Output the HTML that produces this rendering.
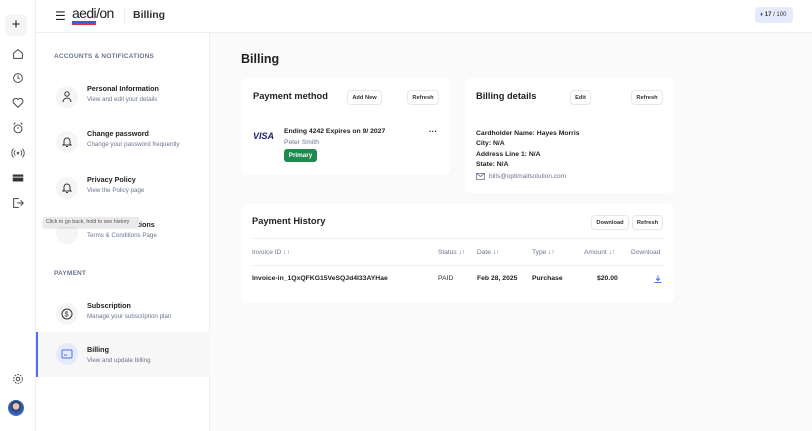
<!DOCTYPE html>
<html><head><style>
*{box-sizing:border-box;margin:0;padding:0}
body{width:812px;height:431px;overflow:hidden;background:#fafafa;font-family:"Liberation Sans",sans-serif;color:#222;position:relative}
.abs{position:absolute}
.rail{left:0;top:0;width:36px;height:431px;background:#fff;border-right:1px solid #eee}
.top{left:36px;top:0;width:776px;height:33px;background:#fff;border-bottom:1px solid #eee}
.side{left:36px;top:33px;width:174px;height:398px;background:#fff;border-right:1px solid #eee}
.ri{position:absolute;left:11px;width:14px;height:14px}
.lbl{font-size:6.5px;color:#6b7590;letter-spacing:.2px;font-weight:bold}
.it{position:absolute;left:0;width:174px;height:46px}
.ic{position:absolute;left:20px;top:12px;width:22px;height:22px;border-radius:50%;background:#f5f5f5}
.t{position:absolute;left:51px;top:10px;font-size:7.2px;font-weight:bold;color:#222}
.s{position:absolute;left:51px;top:22px;font-size:6.2px;color:#6b7590}
.card{position:absolute;background:#fff;border-radius:6px}
.h{position:absolute;font-size:9.3px;font-weight:bold;color:#222}
.btn{position:absolute;height:15px;border:1px solid #e5e7eb;border-radius:4px;font-size:5.7px;font-weight:bold;color:#333;display:flex;align-items:center;justify-content:center;background:#fff}
.b7{font-size:6.8px;font-weight:bold;color:#222;position:absolute}
.th{position:absolute;font-size:6.6px;color:#6b7590;top:45px}
.td{position:absolute;font-size:6.8px;font-weight:bold;color:#222;top:71px}
</style></head><body>
<div class="abs rail">
 <div class="abs" style="left:5px;top:14px;width:22px;height:22px;border-radius:6px;background:#f5f5f5;text-align:center;font-size:15px;line-height:21px;color:#222">+</div>
 <svg class="ri" style="top:47px" viewBox="0 0 16 16" fill="none" stroke="#444" stroke-width="1.1"><path d="M3 7l5-4 5 4v6H3z"/></svg>
 <svg class="ri" style="top:71px" viewBox="0 0 16 16" fill="none" stroke="#444" stroke-width="1.1"><circle cx="8" cy="8" r="5"/><path d="M8 5v3l2 1"/></svg>
 <svg class="ri" style="top:96px" viewBox="0 0 16 16" fill="none" stroke="#444" stroke-width="1.1"><path d="M8 13L3 8a3 3 0 015-4 3 3 0 015 4z"/></svg>
 <svg class="ri" style="top:121px" viewBox="0 0 16 16" fill="none" stroke="#444" stroke-width="1.1"><circle cx="8" cy="9" r="4.5"/><path d="M8 7v2M3 4l2-2M13 4l-2-2"/></svg>
 <svg class="ri" style="top:146px" viewBox="0 0 16 16" fill="none" stroke="#444" stroke-width="1"><circle cx="8" cy="8" r="1"/><path d="M5 5a4 4 0 000 6M11 5a4 4 0 010 6M3 3a7 7 0 000 10M13 3a7 7 0 010 10"/></svg>
 <svg class="ri" style="top:171px" viewBox="0 0 16 16"><rect x="2" y="4" width="12" height="8" fill="#333"/><path d="M2 7h12" stroke="#fff"/></svg>
 <svg class="ri" style="top:196px" viewBox="0 0 16 16" fill="none" stroke="#444" stroke-width="1.1"><path d="M9 3H3v10h6M7 8h7M11 5l3 3-3 3"/></svg>
 <svg class="ri" style="top:372px" viewBox="0 0 16 16" fill="none" stroke="#444" stroke-width="1.1"><circle cx="8" cy="8" r="2"/><circle cx="8" cy="8" r="5" stroke-dasharray="2 1.2"/></svg>
 <div class="abs" style="left:8px;top:400px;width:16px;height:16px;border-radius:50%;background:radial-gradient(circle at 50% 40%,#e8c4a8 25%,#2c3e70 28%,#3a6ec8 70%)"></div>
</div>
<div class="abs top">
 <div class="abs" style="left:19px;top:9px;font-size:12px;color:#222">☰</div>
 <div class="abs" style="left:36px;top:5px;font-size:14px;color:#222;letter-spacing:-.6px">aedi/on</div>
 <div class="abs" style="left:36px;top:21px;width:24px;height:1.5px;background:#3b5bdb"></div>
 <div class="abs" style="left:36px;top:23px;width:24px;height:1.5px;background:#e03131"></div>
 <div class="abs" style="left:88px;top:7px;width:1px;height:18px;background:#eee"></div>
 <div class="abs" style="left:97px;top:9px;font-size:10.5px;font-weight:bold;color:#333">Billing</div>
 <div class="abs" style="left:719px;top:7px;width:38px;height:16px;border-radius:4px;background:#e6ebfb;font-size:6px;color:#333;line-height:16px;padding-left:5px"><span style="color:#3b5bdb">♦</span> <b>17</b> / 100</div>
</div>
<div class="abs side">
 <div class="abs lbl" style="left:18px;top:20px">ACCOUNTS &amp; NOTIFICATIONS</div>
 <div class="it" style="top:41px"><div class="ic"></div><svg class="abs" style="left:26px;top:17px" width="10" height="12" viewBox="0 0 10 12" fill="none" stroke="#333"><circle cx="5" cy="3" r="2.2"/><path d="M1 11a4 4 0 018 0"/></svg><div class="t">Personal Information</div><div class="s">View and edit your details</div></div>
 <div class="it" style="top:86px"><div class="ic"></div><svg class="abs" style="left:26px;top:17px" width="10" height="12" viewBox="0 0 10 12" fill="none" stroke="#333"><path d="M2 8V5a3 3 0 016 0v3l1 1H1zM4 10.5h2"/></svg><div class="t">Change password</div><div class="s">Change your password frequently</div></div>
 <div class="it" style="top:132px"><div class="ic"></div><svg class="abs" style="left:26px;top:17px" width="10" height="12" viewBox="0 0 10 12" fill="none" stroke="#333"><path d="M2 8V5a3 3 0 016 0v3l1 1H1zM4 10.5h2"/></svg><div class="t">Privacy Policy</div><div class="s">View the Policy page</div></div>
 <div class="it" style="top:177px"><div class="ic"></div><div class="t">Terms &amp; Conditions</div><div class="s">Terms &amp; Conditions Page</div></div>
 <div class="abs" style="left:7px;top:184px;width:96px;height:10px;background:#eceae8;border-radius:2px;font-size:5.3px;color:#555;line-height:10px;padding-left:3px;box-shadow:0 1px 2px rgba(0,0,0,.15);z-index:5">Click to go back, hold to see history</div>
 <div class="abs lbl" style="left:18px;top:237px">PAYMENT</div>
 <div class="it" style="top:258px"><div class="ic"></div><svg class="abs" style="left:25px;top:17px" width="12" height="12" viewBox="0 0 12 12" fill="none" stroke="#333"><circle cx="6" cy="6" r="5"/><text x="3.6" y="8.6" font-size="7" fill="#333" stroke="none" font-family="Liberation Sans">$</text></svg><div class="t">Subscription</div><div class="s">Manage your subscription plan</div></div>
 <div class="it" style="top:299px;height:45px;background:#f7f7f7;border-left:2px solid #4c6ef5"><div class="ic" style="left:18px;top:11px;background:#e6ebfb"></div><svg class="abs" style="left:23px;top:17px" width="12" height="10" viewBox="0 0 12 10" fill="none" stroke="#4c6ef5"><rect x="1" y="1" width="10" height="8" rx="1"/><path d="M3 6h3"/></svg><div class="t" style="left:49px;top:13px">Billing</div><div class="s" style="left:49px;top:25px">View and update billing</div></div>
</div>
<div class="abs" style="left:241px;top:52px;font-size:12.5px;font-weight:bold;color:#222">Billing</div>
<div class="card" style="left:241px;top:78px;width:209px;height:97px">
 <div class="h" style="left:12px;top:13px">Payment method</div>
 <div class="btn" style="left:106px;top:12px;width:35px">Add New</div>
 <div class="btn" style="left:166px;top:12px;width:32px">Refresh</div>
 <div class="abs" style="left:12px;top:53px;font-size:9px;font-weight:bold;font-style:italic;color:#1a1f71">VISA</div>
 <div class="b7" style="left:43px;top:50px">Ending 4242 Expires on 9/ 2027</div>
 <div class="abs" style="left:43px;top:61px;font-size:6.7px;color:#6b7590">Peter Smith</div>
 <div class="abs" style="left:43px;top:71px;width:33px;height:13px;border-radius:3px;background:#1e8a4e;color:#fff;font-size:6.3px;font-weight:bold;text-align:center;line-height:13px">Primary</div>
 <div class="abs" style="left:188px;top:49px;font-size:8px;font-weight:bold">···</div>
</div>
<div class="card" style="left:465px;top:78px;width:209px;height:115px">
 <div class="h" style="left:11px;top:13px">Billing details</div>
 <div class="btn" style="left:105px;top:12px;width:21px">Edit</div>
 <div class="btn" style="left:166px;top:12px;width:32px">Refresh</div>
 <div class="b7" style="left:11px;top:51px;line-height:10.3px">Cardholder Name: Hayes Morris<br>City: N/A<br>Address Line 1: N/A<br>State: N/A</div>
 <svg class="abs" style="left:11px;top:95px" width="9" height="7" viewBox="0 0 9 7" fill="none" stroke="#6b7590" stroke-width=".8"><rect x=".5" y=".5" width="8" height="6"/><path d="M.5 .5l4 3 4-3"/></svg>
 <div class="abs" style="left:24px;top:95px;font-size:6.5px;color:#6b7590">bills@optimaitsolution.com</div>
</div>
<div class="card" style="left:241px;top:204px;width:433px;height:99px">
 <div class="h" style="left:11px;top:12px">Payment History</div>
 <div class="btn" style="left:350px;top:11px;width:38px">Download</div>
 <div class="btn" style="left:391px;top:11px;width:31px">Refresh</div>
 <div class="abs" style="left:11px;top:34px;width:411px;height:1px;background:#f0f0f0"></div>
 <div class="th" style="left:11px">Invoice ID ↓↑</div>
 <div class="th" style="left:197px">Status ↓↑</div>
 <div class="th" style="left:236px">Date ↓↑</div>
 <div class="th" style="left:291px">Type ↓↑</div>
 <div class="th" style="left:343px">Amount ↓↑</div>
 <div class="th" style="left:390px">Download</div>
 <div class="abs" style="left:11px;top:61px;width:411px;height:1px;background:#f0f0f0"></div>
 <div class="td" style="left:11px">Invoice-in_1QxQFKG15VeSQJd4I33AYHae</div>
 <div class="td" style="left:197px;font-weight:normal;color:#333">PAID</div>
 <div class="td" style="left:236px">Feb 28, 2025</div>
 <div class="td" style="left:291px">Purchase</div>
 <div class="td" style="left:356px">$20.00</div>
 <svg class="abs" style="left:413px;top:71px" width="8" height="8" viewBox="0 0 8 8" fill="none" stroke="#4c6ef5" stroke-width="1"><path d="M4 .5v5M2 3.5l2 2 2-2M.5 7.5h7"/></svg>
</div>
</body></html>
